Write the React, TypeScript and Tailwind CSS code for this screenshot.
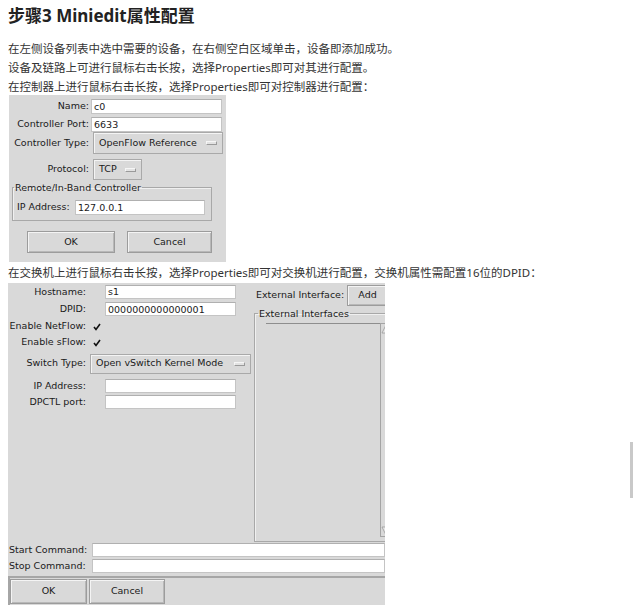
import type { ReactNode } from 'react';

// Tk-like widgets used by the two Miniedit dialogs
const Entry = ({ value = '', className = '' }: { value?: string; className?: string }) => (
  <div className={`bg-white border border-[#c4c4c4] border-t-[#b0b0b0] flex items-center pl-[2px] leading-none shrink-0 ${className}`}>
    {value}
  </div>
);

const OptionMenu = ({ label, className = '' }: { label: string; className?: string }) => (
  <div
    className={`flex items-center justify-between shrink-0 bg-[#d9d9d9] border border-[#a9a9a9] shadow-[inset_1px_1px_0_#f4f4f4] pl-[5px] pr-[5px] ${className}`}
  >
    <span>{label}</span>
    <span className="w-[11px] h-[4px] bg-[#e2e2e2] border border-[#9a9a9a] border-t-[#f6f6f6] border-l-[#f6f6f6]" />
  </div>
);

const TkButton = ({ children, className = '' }: { children: ReactNode; className?: string }) => (
  <div
    className={`flex items-center justify-center shrink-0 bg-[#d9d9d9] border border-[#9c9c9c] shadow-[inset_1px_1px_0_#f4f4f4,inset_-1px_-1px_0_#b8b8b8] ${className}`}
  >
    {children}
  </div>
);

const Check = () => (
  <svg width="8" height="8" viewBox="0 0 8 8" className="ml-[7px]">
    <path d="M1 4 L3 6.5 L7 1" fill="none" stroke="#111" strokeWidth="1.6" />
  </svg>
);

function ControllerDialog() {
  return (
    <div className="ml-[9px] -mt-[1px] w-[217px] h-[167px] bg-[#d9d9d9] pt-[4px] text-[#1a1a1a] font-['DejaVu_Sans',sans-serif] text-[9.5px]">
      <div className="flex items-center">
        <span className="w-[80px] text-right">Name:</span>
        <Entry value="c0" className="ml-[2px] w-[131px] h-[15px]" />
      </div>
      <div className="flex items-center mt-[3px]">
        <span className="w-[80px] text-right">Controller Port:</span>
        <Entry value="6633" className="ml-[2px] w-[131px] h-[15px]" />
      </div>
      <div className="flex items-center">
        <span className="w-[80px] text-right">Controller Type:</span>
        <OptionMenu label="OpenFlow Reference" className="ml-[4px] w-[130px] h-[22px]" />
      </div>
      <div className="flex items-center mt-[5px]">
        <span className="w-[80px] text-right">Protocol:</span>
        <OptionMenu label="TCP" className="ml-[4px] w-[49px] h-[21px]" />
      </div>
      <fieldset className="mt-[1px] ml-[3px] w-[200px] border border-[#a8a8a8] shadow-[inset_1px_1px_0_#f0f0f0]">
        <legend className="ml-[1px] px-[1px] leading-[13px]">Remote/In-Band Controller</legend>
        <div className="flex items-center mt-[6px] mb-[5px] pl-[4px]">
          <span className="w-[58px]">IP Address:</span>
          <Entry value="127.0.0.1" className="w-[130px] h-[15px]" />
        </div>
      </fieldset>
      <div className="flex mt-[10px]">
        <TkButton className="ml-[18px] w-[88px] h-[22px]">OK</TkButton>
        <TkButton className="ml-[12px] w-[85px] h-[22px]">Cancel</TkButton>
      </div>
    </div>
  );
}

function SwitchDialog() {
  return (
    <div className="ml-[8px] mt-[1px] w-[377px] h-[322px] bg-[#d9d9d9] overflow-hidden text-[#1a1a1a] font-['DejaVu_Sans',sans-serif] text-[9.5px]">
      <div className="flex h-[259px]">
        {/* left column */}
        <div className="w-[246px] shrink-0 pt-[2px]">
          <div className="flex items-center">
            <span className="w-[78px] text-right">Hostname:</span>
            <Entry value="s1" className="ml-[19px] w-[131px] h-[14px]" />
          </div>
          <div className="flex items-center mt-[3px]">
            <span className="w-[78px] text-right">DPID:</span>
            <Entry value="0000000000000001" className="ml-[19px] w-[131px] h-[14px]" />
          </div>
          <div className="flex items-center h-[16px] mt-[2px]">
            <span className="w-[78px] text-right whitespace-nowrap">Enable NetFlow:</span>
            <Check />
          </div>
          <div className="flex items-center h-[16px]">
            <span className="w-[78px] text-right">Enable sFlow:</span>
            <Check />
          </div>
          <div className="flex items-center mt-[3px]">
            <span className="w-[78px] text-right">Switch Type:</span>
            <OptionMenu label="Open vSwitch Kernel Mode" className="ml-[4px] w-[161px] h-[20px]" />
          </div>
          <div className="flex items-center mt-[5px]">
            <span className="w-[78px] text-right">IP Address:</span>
            <Entry className="ml-[19px] w-[131px] h-[14px]" />
          </div>
          <div className="flex items-center mt-[2px]">
            <span className="w-[78px] text-right">DPCTL port:</span>
            <Entry className="ml-[19px] w-[131px] h-[14px]" />
          </div>
        </div>

        {/* right column */}
        <div className="w-[145px] shrink-0">
          <div className="flex items-center h-[23px] pt-[1px]">
            <span className="ml-[2px] w-[91px] whitespace-nowrap">External Interface:</span>
            <TkButton className="w-[41px] h-[21px]">Add</TkButton>
          </div>
          <fieldset className="mt-[1px] h-[235px] border border-[#a8a8a8] border-r-0 shadow-[inset_1px_1px_0_#f0f0f0]">
            <legend className="ml-[3px] px-[1px] leading-[13px]">External Interfaces</legend>
            <div className="flex mt-[3px]">
              <div className="ml-[11px] w-[114px] h-[214px] border-t border-[#8e8e8e]" />
              <div className="w-[11px] h-[214px] border border-[#a4a4a4] flex flex-col justify-between items-center py-[1px]">
                <svg width="9" height="9" viewBox="0 0 9 9">
                  <path d="M4.5 1 L8 8 L1 8 Z" fill="#e6e6e6" stroke="#9a9a9a" strokeWidth="0.8" />
                </svg>
                <svg width="9" height="9" viewBox="0 0 9 9">
                  <path d="M1 1 L8 1 L4.5 8 Z" fill="#e6e6e6" stroke="#9a9a9a" strokeWidth="0.8" />
                </svg>
              </div>
            </div>
          </fieldset>
        </div>
      </div>

      <div className="flex items-center mt-[1px]">
        <span className="w-[84px] pl-[1px] whitespace-nowrap">Start Command:</span>
        <Entry className="flex-1 h-[14px]" />
      </div>
      <div className="flex items-center mt-[2px]">
        <span className="w-[84px] pl-[1px] whitespace-nowrap">Stop Command:</span>
        <Entry className="flex-1 h-[14px]" />
      </div>
      <div className="flex mt-[2px] pt-[1px] h-[30px] border-t-2 border-l-2 border-[#a6a6a6]">
        <TkButton className="w-[77px] h-[25px]">OK</TkButton>
        <TkButton className="ml-[2px] w-[76px] h-[25px]">Cancel</TkButton>
      </div>
    </div>
  );
}

export default function App() {
  return (
    <div className="relative w-[633px] h-[607px] overflow-hidden bg-white font-['Noto_Sans','Noto_Sans_CJK_SC',sans-serif]">
      <h2 className="pt-[4px] pl-[8px] h-[28px] leading-[24px] text-[17px] font-bold text-[#222]">
        步骤3 Miniedit属性配置
      </h2>
      <div className="mt-[11px] pl-[8px] text-[11.5px] leading-[19px] text-[#333]">
        <p>在左侧设备列表中选中需要的设备，在右侧空白区域单击，设备即添加成功。</p>
        <p>设备及链路上可进行鼠标右击长按，选择Properties即可对其进行配置。</p>
        <p>在控制器上进行鼠标右击长按，选择Properties即可对控制器进行配置：</p>
      </div>
      <ControllerDialog />
      <p className="mt-[1px] pl-[8px] text-[11.5px] leading-[19px] text-[#333]">
        在交换机上进行鼠标右击长按，选择Properties即可对交换机进行配置，交换机属性需配置16位的DPID：
      </p>
      <SwitchDialog />

      {/* page scrollbar thumb */}
      <div className="absolute left-[630px] top-[442px] w-[3px] h-[56px] bg-[#c9c9c9]" />
    </div>
  );
}
